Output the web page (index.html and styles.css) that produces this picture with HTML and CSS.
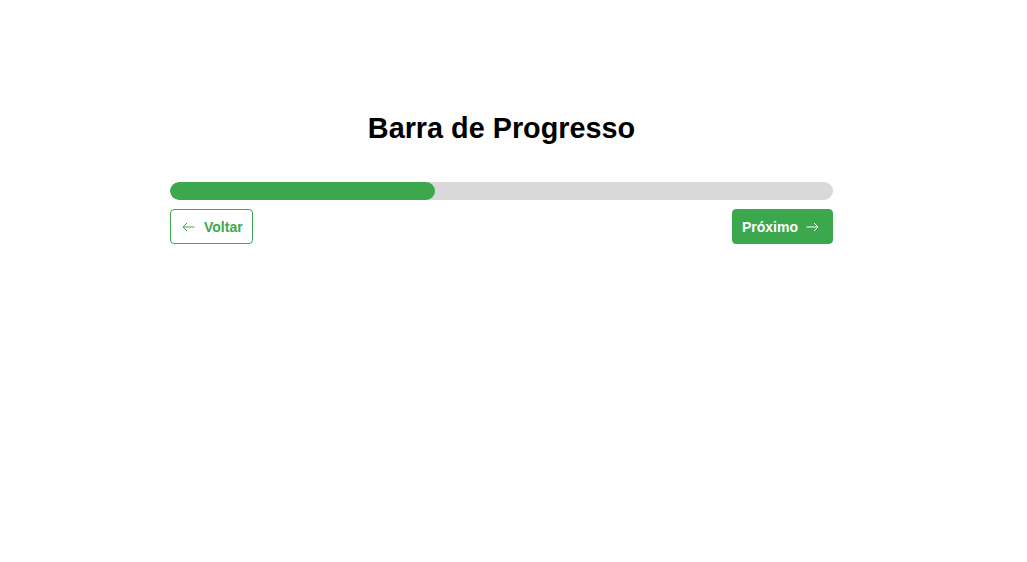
FILE: index.html
```html
<!DOCTYPE html>
<html lang="pt">
<head>
<meta charset="utf-8">
<title>Barra de Progresso</title>
<link rel="stylesheet" href="styles.css">
</head>
<body>
<main class="wrap">
  <h1 class="title">Barra de Progresso</h1>
  <div class="track"><div class="fill" style="width: 40%"></div></div>
  <div class="actions">
    <button class="btn btn-outline" type="button">
      <svg class="arrow" width="13" height="10" viewBox="0 0 13 10"><path d="M12.5 5H1M5 1L1 5l4 4" fill="none" stroke="currentColor" stroke-width="1"/></svg>
      <span>Voltar</span>
    </button>
    <button class="btn btn-solid" type="button">
      <span>Próximo</span>
      <svg class="arrow" width="13" height="10" viewBox="0 0 13 10"><path d="M0.5 5H12M8 1l4 4-4 4" fill="none" stroke="currentColor" stroke-width="1"/></svg>
    </button>
  </div>
</main>
</body>
</html>
```
FILE: styles.css
```css
html, body {
  margin: 0;
  padding: 0;
  background: #fff;
}
body {
  font-family: "Liberation Sans", Arial, sans-serif;
  color: #000;
  padding-right: 24px;
}
.wrap {
  width: 663px;
  margin: 0 auto;
  padding-top: 112px;
}
.title {
  margin: 0 0 37px;
  font-size: 28.8px;
  line-height: 33px;
  font-weight: 700;
  text-align: center;
}
.track {
  height: 18px;
  border-radius: 9px;
  background: #d9d9d9;
  overflow: hidden;
}
.fill {
  height: 100%;
  border-radius: 9px;
  background: #3ba84d;
}
.actions {
  display: flex;
  justify-content: space-between;
  margin-top: 9px;
}
.btn {
  display: inline-flex;
  align-items: center;
  gap: 9px;
  height: 35px;
  box-sizing: border-box;
  padding: 0 9px 0 11px;
  border-radius: 4px;
  font-family: "Liberation Sans", Arial, sans-serif;
  font-size: 14px;
  font-weight: 700;
  cursor: pointer;
}
.btn-outline {
  background: #fff;
  color: #3ba84d;
  border: 1px solid #3ba84d;
}
.btn-solid {
  background: #3ba84d;
  color: #fff;
  border: 1px solid #3ba84d;
  padding: 0 13px 0 9px;
  gap: 8px;
}
.arrow {
  display: block;
}
```
